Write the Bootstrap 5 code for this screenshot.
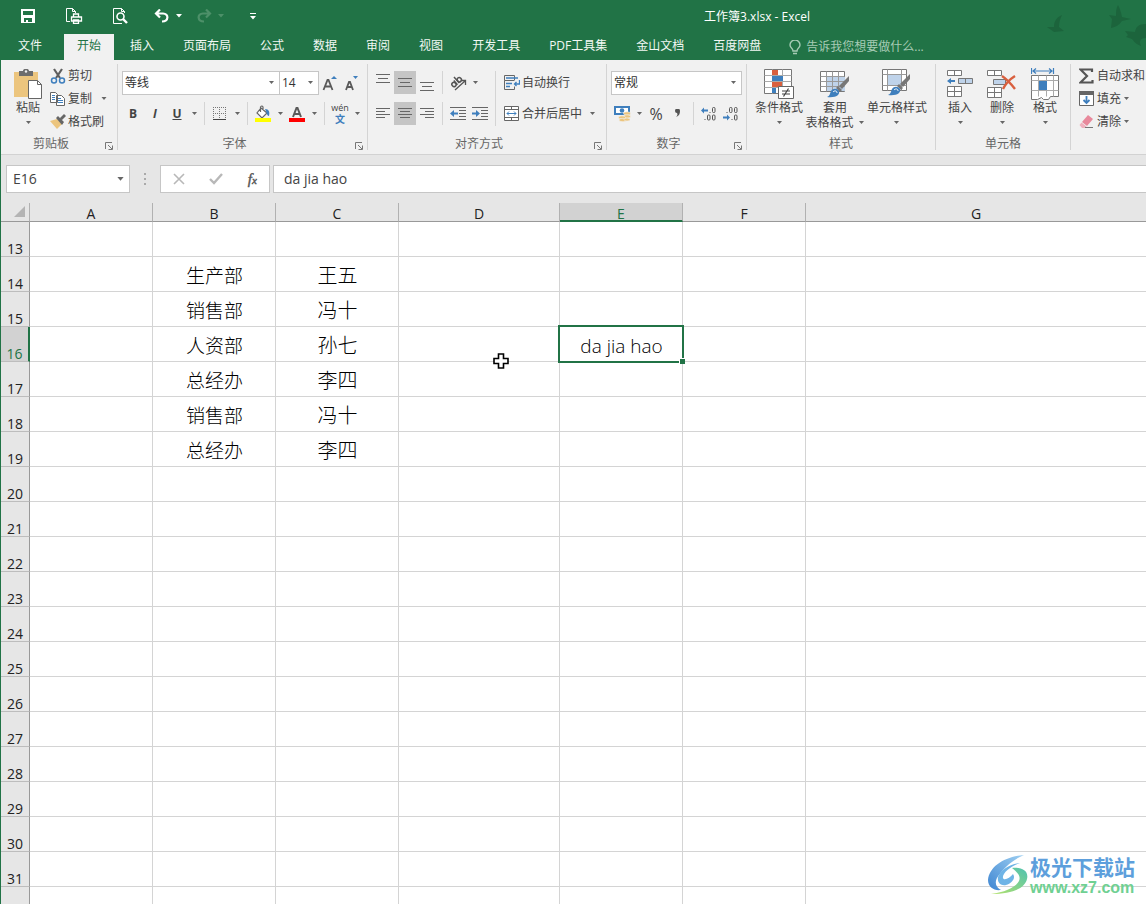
<!DOCTYPE html>
<html lang="zh-CN">
<head>
<meta charset="utf-8">
<meta name="viewport" content="width=device-width, initial-scale=1">
<title>工作簿3.xlsx - Excel</title>
<link href="https://cdn.jsdelivr.net/npm/bootstrap@5.3.0/dist/css/bootstrap.min.css" rel="stylesheet">
<style>
:root{--xl:#217346;--ink:#444;--line:#c6c6c6}
body{font-family:"Open Sans","Noto Sans CJK SC",sans-serif;font-size:12px;line-height:16px;color:var(--ink);background:#fff;border-left:1px solid var(--xl);overflow:hidden}
button{font:inherit;color:inherit;border:0;background:none;padding:0}
svg{display:block;flex:none}
.topbar{background:var(--xl);color:#fff}
.quick{height:34px;padding:0 0 2px 16px}
.quick button{width:22px;height:24px;display:flex;align-items:center;justify-content:center}
.quick .mini{width:12px}
.quick .far{margin-left:24px}
.quick .mid{margin-left:20px}
.doc-title{padding:2px 336px 0 0}
.birds{right:0;top:0}
.tabs{height:26px;gap:1px}
.tabs a{color:#f2f8f4;text-decoration:none;padding:3px 14px;height:26px;line-height:18px;white-space:nowrap}
.tabs a.file{padding:3px 17px;margin-right:4px}
.tabs a.active{background:#f1f1f1;color:var(--xl);padding:3px 13px 3px 13px;margin-right:1px}
.hint{color:#a6cbb5;padding-left:13px;gap:5px}
.hint input{font:inherit;line-height:18px;background:none;border:0;padding:0;width:130px}
.hint input::placeholder{color:#a6cbb5;opacity:1}
.ribbon{background:#f1f1f1;height:95px;border-bottom:1px solid #d2d2d2;overflow:hidden}
.group{flex:none;display:flex;flex-direction:column;border-right:1px solid #d4d4d4;margin:4px 0}
.group-body{height:71px;padding:7px 4px 0}
.clip-body{padding:0 4px 0 13px;gap:8px}
.group-name{color:#666;display:flex;height:16px}
.group-name span{flex:1;text-align:center;padding-top:2px;line-height:16px}
.group-name button{width:16px;display:flex;align-items:center;justify-content:center;padding-top:7px}
.g-clip{width:117px}.g-font{width:250px}.g-align{width:239px}.g-num{width:140px}.g-style{width:189px}.g-cell{width:135px}
.line-of{display:flex;height:23px}
.line-of+.line-of{margin-top:8px}
.tool{width:22px;height:23px;display:flex;align-items:center;justify-content:center;flex:none}
.tool.on{background:#c5c5c5}
.tool.percent{font-size:16px}
.drop{width:12px;height:23px;display:flex;align-items:center;justify-content:center;flex:none}
.split{width:1px;background:#d4d4d4;margin:0 4px;flex:none}
.pinyin{font-size:9px;line-height:12px;color:#444}
.pinyin b{color:#3f7fbd;font-size:10px;line-height:11px}
.form-select.pick{font-size:12px;line-height:16px;color:#333;border:1px solid var(--line);border-radius:0;height:24px;padding:2px 18px 2px 2px;flex:none;background-color:#fff;background-size:7px 4px;background-position:right 4px center;background-image:url("data:image/svg+xml,%3Csvg xmlns='http://www.w3.org/2000/svg' viewBox='0 0 7 4'%3E%3Cpath d='M1 0h5L3.500 3z' fill='%23666'/%3E%3C/svg%3E")}
.pick.face{width:158px}.pick.pt{width:40px;margin-left:-1px}.pick.fmt{width:131px}
.small-cmd{display:flex;align-items:center;height:23px;gap:2px;white-space:nowrap}
.small-cmd svg:first-child{width:16px}
.big{display:flex;flex-direction:column;align-items:center;line-height:15px;white-space:nowrap}
.big .pic{height:32px;display:flex;align-items:center}
.big .arrow{height:15px;display:flex;align-items:center}
.formula{background:#e6e6e6;padding:10px 0 10px 5px;height:48px}
.formula .pick.name{width:124px;height:28px;font-size:14px;line-height:20px;padding-left:6px;color:#444;background-size:9px 5px}
.boxed{background:#fff;border:1px solid var(--line);height:28px}
.grip{width:30px;display:flex;justify-content:center;align-items:center}
.fx{width:110px;margin-right:3px}
.fn{font:italic 15px/20px "Liberation Serif",serif;color:#555;-webkit-text-stroke:.4px #555}
.fn span{font-size:11px}
.entry{font-size:14px;line-height:20px;color:#444;padding:0 10px 2px;border-right:0;border-radius:0;outline:0;min-width:0}
.sheet{table-layout:fixed;border-collapse:separate;border-spacing:0;width:100%;color:#000}
.sheet th{background:#e6e6e6;font-weight:400;font-size:14px;text-align:center;padding:0;color:#222}
.sheet thead th{height:19px;line-height:14px;border-bottom:1px solid #999;border-right:1px solid #b1b1b1;vertical-align:bottom}
.sheet tbody th{height:35px;line-height:14px;vertical-align:bottom;border-right:1px solid #999;border-bottom:1px solid #bdbdbd}
.sheet td{height:35px;padding:3px 0 0 1px;border-right:1px solid #d4d4d4;border-bottom:1px solid #d4d4d4;text-align:center;font-size:19px;line-height:28px;font-weight:300;vertical-align:middle}
.sheet td:nth-of-type(3){font-size:20px}
.sheet tr>:last-child{border-right:0}
.sheet thead th.sel{background:#d2d2d2;color:var(--xl);border-bottom:2px solid var(--xl);line-height:13px}
.sheet tbody th.sel{background:#d2d2d2;color:var(--xl);border-right:2px solid var(--xl)}
.c-no{width:29px}.c-m{width:123px}.c-w{width:161px}
.cursor-ring{inset:-2px;border:2px solid var(--xl)}
.handle{right:-3px;bottom:-3px;width:6px;height:6px;background:var(--xl);border:solid #fff;border-width:1px 0 0 1px}
.pointer{right:50px;bottom:-8px}
.brand{right:11px;bottom:7px;gap:1px}
.brand-cn{font:700 21px/26px "Noto Sans CJK SC",sans-serif;color:#5d9fdc}
.brand-url{font:700 16px/18px "Liberation Sans",sans-serif;color:#6fd092}
</style>
</head>
<body class="vh-100 position-relative">
<svg width="0" height="0" class="position-absolute"><defs>
<symbol id="dn" viewBox="0 0 7 4"><path d="M1 0h5L3.500 3z" fill="#666"/></symbol>
<symbol id="launch" viewBox="0 0 8 8"><path d="M.5 7V.5H7M3 3l4 4M7.500 3.500v4h-4" fill="none" stroke="#777"/></symbol>
<symbol id="brush" viewBox="0 0 24 24"><path d="M23 1v5l-7 8-3-3z" fill="#777"/><path d="M12 11l4 4-2 2-4-4z" fill="#777"/><path d="M1 22c3-1 3-4 4-6 2-3 6-3 8 0 1 4-3 7-12 6z" fill="#3f7fbd"/><path d="M7 17c2-2 4-1 4 1" stroke="#fff" fill="none"/></symbol>
</defs></svg>

<header class="topbar position-relative">
  <svg class="birds position-absolute" width="104" height="50" viewBox="0 0 104 50" fill="#1c643c"><path d="M20 15c-7 3-8 8-8 12l-7 0c2 2 5 3 7 5l10-1-5-4c0-4 1-8 3-12zM76 5c-2 3-2 7-2 11l-7-1 3 4-1 9c5-1 8-3 11-7l9-2-9-2c-1-5-2-8-4-12zM104 24c-8 0-10 3-11 8l-10-1 3 4-2 2 6 2c3 4 6 6 9 7-2-5-1-8 5-8z"/></svg>
  <div class="quick d-flex align-items-center">
    <button aria-label="保存"><svg width="14" height="14" viewBox="0 0 14 14"><path d="M0 0h14v14H0zM2 2v4h10V2zM3 9v4h2v-2h2v2h4V9z" fill="#fff" fill-rule="evenodd"/></svg></button>
    <button class="far" aria-label="快速打印"><svg width="17" height="16" viewBox="0 0 17 16" fill="none" stroke="#fff"><path d="M4 13.500H.5V.5h6l3 3V5M6.500.5v3h3"/><path d="M7.500 8.500V6h5v2.500M5.500 9h10v4h-10zM7.500 12h5v3.300h-5z" stroke-width="1.300"/></svg></button>
    <button class="far" aria-label="打印预览"><svg width="15" height="16" viewBox="0 0 15 16" fill="none" stroke="#fff"><path d="M3 15.500H.5V.5h8l3 3V5M8.500.5v3h3M3 15.500h6"/><circle cx="7.500" cy="8.500" r="3.500" stroke-width="1.600"/><path d="M10 11l4 4" stroke-width="2.400"/></svg></button>
    <button class="mid" aria-label="撤消"><svg width="16" height="14" viewBox="0 0 16 14" fill="none" stroke="#fff" stroke-width="2.200"><path d="M6 .5L2 4.500 6 8.500M2 4.500h7c6 0 6 8-1 8"/></svg></button>
    <button class="mini" aria-label="撤消列表"><svg width="6" height="4" viewBox="0 0 6 4"><path d="M0 0h6L3 3.500z" fill="#fff"/></svg></button>
    <button class="ms-2" aria-label="恢复"><svg width="16" height="14" viewBox="0 0 16 14" fill="none" stroke="#4d9069" stroke-width="2.200"><path d="M10 .5l4 4-4 4M14 4.500H7c-6 0-6 8 1 8"/></svg></button>
    <button class="mini" aria-label="恢复列表"><svg width="6" height="4" viewBox="0 0 6 4"><path d="M0 0h6L3 3.500z" fill="#4d9069"/></svg></button>
    <button class="mini mid" aria-label="自定义快速访问工具栏"><svg width="6" height="7" viewBox="0 0 6 7"><path d="M0 0h6v1H0zM0 3h6L3 6.500z" fill="#fff"/></svg></button>
    <div class="doc-title ms-auto">工作簿3.xlsx - Excel</div>
  </div>
  <nav class="tabs d-flex">
    <a class="file" href="#">文件</a><a class="active" href="#">开始</a><a href="#">插入</a><a href="#">页面布局</a><a href="#">公式</a><a href="#">数据</a><a href="#">审阅</a><a href="#">视图</a><a href="#">开发工具</a><a href="#">PDF工具集</a><a href="#">金山文档</a><a href="#">百度网盘</a>
    <label class="hint d-flex align-items-center"><svg width="12" height="15" viewBox="0 0 12 15" fill="none" stroke="#a6cbb5" stroke-width="1.400"><path d="M4 11c0-3-3-3-3-6a5 5 0 0 1 10 0c0 3-3 3-3 6zM4 13.500h4"/></svg><input type="text" aria-label="告诉我" placeholder="告诉我您想要做什么..."></label>
  </nav>
</header>

<section class="ribbon d-flex">
  <div class="group g-clip">
    <div class="group-body clip-body d-flex">
      <button class="big pt-1"><span class="pic"><svg width="28" height="30" viewBox="0 0 28 30"><path d="M0 3h24v25H0z" fill="#ecc57e"/><path d="M5 2h4c0-3 6-3 6 0h4v5H5z" fill="#6d6d6d"/><circle cx="12" cy="2.500" r="1.200" fill="#f1f1f1"/><path d="M14.500 11.500h9l4 4v14h-13z" fill="#fff" stroke="#666"/><path d="M23.500 11.500v4h4" fill="none" stroke="#666"/></svg></span>粘贴<span class="arrow"><svg width="7" height="4"><use href="#dn"/></svg></span></button>
      <div>
        <button class="small-cmd"><svg width="16" height="16" viewBox="0 0 16 16"><path d="M4 1l6 9M12 1L6 10" stroke="#5f5f5f" stroke-width="2.200"/><g fill="none" stroke="#3f7fbd" stroke-width="1.500"><circle cx="4" cy="12.500" r="2.500"/><circle cx="12" cy="12.500" r="2.500"/></g></svg>剪切</button>
        <button class="small-cmd"><svg width="16" height="14" viewBox="0 0 16 14"><path d="M.5.5h5l2 2v8h-7zM6.500 3.500h5l3 3v7h-8z" fill="#fff" stroke="#666"/><path d="M2 3.500h3M2 5.500h3M2 7.500h3M8 6.500h3M8 8.500h5M8 10.500h5" stroke="#3f7fbd"/></svg>复制<svg class="ms-1" width="12" height="4"><use href="#dn"/></svg></button>
        <button class="small-cmd"><svg width="16" height="15" viewBox="0 0 16 15"><path d="M0 7l7-2 5 5-5 5z" fill="#ecc57e"/><path d="M6 4l2-2 6 6-2 3zM10 4l4-4 2 2-4 4z" fill="#666"/></svg>格式刷</button>
      </div>
    </div>
    <div class="group-name"><span>剪贴板</span><button aria-label="剪贴板设置"><svg width="8" height="8"><use href="#launch"/></svg></button></div>
  </div>

  <div class="group g-font">
    <div class="group-body">
      <div class="line-of">
        <select class="form-select pick face" aria-label="字体"><option>等线</option></select><select class="form-select pick pt" aria-label="字号"><option>14</option></select>
        <button class="tool" aria-label="增大字号"><svg width="16" height="16" viewBox="0 0 16 16"><path d="M1.500 15L5.500 5h1l4 10M3 11.500h6" fill="none" stroke="#5a5a5a" stroke-width="1.800"/><path d="M9 4l3-3 3 3z" fill="#3f7fbd"/></svg></button>
        <button class="tool" aria-label="减小字号"><svg width="16" height="16" viewBox="0 0 16 16"><path d="M2 15l3-8h1l3 8M3 12h5" fill="none" stroke="#5a5a5a" stroke-width="1.800"/><path d="M9 1h5l-2.500 3z" fill="#3f7fbd"/></svg></button>
      </div>
      <div class="line-of">
        <button class="tool fw-bold" aria-label="加粗">B</button><button class="tool fw-bold fst-italic" aria-label="倾斜">I</button><button class="tool fw-bold text-decoration-underline" aria-label="下划线">U</button><button class="drop" aria-label="下划线选项"><svg width="7" height="4"><use href="#dn"/></svg></button><i class="split"></i>
        <button class="tool" aria-label="边框"><svg width="14" height="14" viewBox="0 0 14 14" fill="none" stroke="#777"><path d="M.5 0v12M6.500 0v12M12.500 0v12M0 .5h13M0 6.500h13" stroke-dasharray="1 1"/><path d="M0 12.500h13" stroke="#444"/></svg></button><button class="drop" aria-label="边框选项"><svg width="7" height="4"><use href="#dn"/></svg></button><i class="split"></i>
        <button class="tool" aria-label="填充颜色"><svg width="16" height="17" viewBox="0 0 16 17"><path d="M6 3l6 5-5 5-5-5zM5.500 7V2q1.500-2 2.500 0v3" fill="#fff" stroke="#666" stroke-width="1.200"/><path d="M10 4c4 0 5 3 4 7-2 0-2-3-4-7z" fill="#3f7fbd"/><path d="M0 13h16v4H0z" fill="#ff0"/></svg></button><button class="drop" aria-label="填充颜色选项"><svg width="7" height="4"><use href="#dn"/></svg></button>
        <button class="tool" aria-label="字体颜色"><svg width="16" height="16" viewBox="0 0 16 16"><path d="M4 11L7.500 2h1L12 11M5 8h6" fill="none" stroke="#5a5a5a" stroke-width="2"/><path d="M0 12h16v4H0z" fill="red"/></svg></button><button class="drop" aria-label="字体颜色选项"><svg width="7" height="4"><use href="#dn"/></svg></button><i class="split"></i>
        <button class="tool pinyin flex-column" aria-label="拼音指南"><span>wén</span><b>文</b></button><button class="drop" aria-label="拼音选项"><svg width="7" height="4"><use href="#dn"/></svg></button>
      </div>
    </div>
    <div class="group-name"><span>字体</span><button aria-label="字体设置"><svg width="8" height="8"><use href="#launch"/></svg></button></div>
  </div>

  <div class="group g-align">
    <div class="group-body d-flex">
      <div>
        <div class="line-of">
          <button class="tool" aria-label="顶端对齐"><svg width="14" height="17" viewBox="0 0 14 17" stroke="#666"><path d="M0 .5h14M2 4.500h10M0 8.500h14"/></svg></button><button class="tool on" aria-label="垂直居中"><svg width="14" height="17" viewBox="0 0 14 17" stroke="#666"><path d="M0 4.500h14M2 8.500h10M0 12.500h14"/></svg></button><button class="tool" aria-label="底端对齐"><svg width="14" height="17" viewBox="0 0 14 17" stroke="#666"><path d="M0 8.500h14M2 12.500h10M0 16.500h14"/></svg></button><i class="split"></i>
          <button class="tool" aria-label="方向"><svg width="17" height="16" viewBox="0 0 17 16" fill="none" stroke="#555" stroke-width="1.300"><path d="M5 15L15 6M15.500 10V5.500H11"/><g transform="rotate(-42 6 7)" stroke-width="1.500"><ellipse cx="2.800" cy="7.500" rx="2" ry="2.200"/><path d="M5.300 4.500v5.500M7.800 2v8"/><ellipse cx="10" cy="7.500" rx="2" ry="2.200"/></g></svg></button><button class="drop" aria-label="方向选项"><svg width="7" height="4"><use href="#dn"/></svg></button>
        </div>
        <div class="line-of">
          <button class="tool" aria-label="左对齐"><svg width="14" height="11" viewBox="0 0 14 11" stroke="#666"><path d="M0 .5h14M0 3.500h9M0 6.500h14M0 9.500h9"/></svg></button><button class="tool on" aria-label="居中"><svg width="14" height="11" viewBox="0 0 14 11" stroke="#666"><path d="M0 .5h14M2 3.500h10M0 6.500h14M2 9.500h10"/></svg></button><button class="tool" aria-label="右对齐"><svg width="14" height="11" viewBox="0 0 14 11" stroke="#666"><path d="M0 .5h14M5 3.500h9M0 6.500h14M5 9.500h9"/></svg></button><i class="split"></i>
          <button class="tool" aria-label="减少缩进"><svg width="16" height="13" viewBox="0 0 16 13"><path d="M0 .5h16M9 3.500h7M9 6.500h7M9 9.500h7M0 12.500h16" stroke="#666"/><path d="M0 6.500l4-3.500v2.500h4v2H4V10z" fill="#3f7fbd"/></svg></button><button class="tool" aria-label="增加缩进"><svg width="16" height="13" viewBox="0 0 16 13"><path d="M0 .5h16M9 3.500h7M9 6.500h7M9 9.500h7M0 12.500h16" stroke="#666"/><path d="M8 6.500L4 3v2.500H0v2h4V10z" fill="#3f7fbd"/></svg></button>
        </div>
      </div>
      <i class="split mb-2"></i>
      <div class="ps-1">
        <button class="line-of small-cmd"><svg width="16" height="16" viewBox="0 0 16 16" fill="none" stroke="#666"><path d="M10.500 5V.5H.5v5h10M.5 5.500v9h10v-3"/><path d="M2 3h12M2 8.500h6M2 11.500h4M15.500 5v4h-5M12.500 7l-2 2 2 2" stroke="#3f7fbd" stroke-width="1.300"/></svg>自动换行</button>
        <div class="line-of"><button class="small-cmd"><svg width="16" height="16" viewBox="0 0 16 16" fill="#fff" stroke="#666"><path d="M.5.5h14v14H.5zM.5 3.500h14M.5 11.500h14M7.500.5v3M7.500 11.500v3"/><path d="M3 7.500h9M5 5.500l-2 2 2 2M10 5.500l2 2-2 2" stroke="#3f7fbd" fill="none"/></svg>合并后居中</button><button class="drop ms-1" aria-label="合并选项"><svg width="7" height="4"><use href="#dn"/></svg></button></div>
      </div>
    </div>
    <div class="group-name"><span>对齐方式</span><button aria-label="对齐设置"><svg width="8" height="8"><use href="#launch"/></svg></button></div>
  </div>

  <div class="group g-num">
    <div class="group-body">
      <div class="line-of"><select class="form-select pick fmt" aria-label="数字格式"><option>常规</option></select></div>
      <div class="line-of">
        <button class="tool" aria-label="会计数字格式"><svg width="17" height="16" viewBox="0 0 17 16"><path d="M1 1h14v7H1z" fill="#fff" stroke="#3f7fbd" stroke-width="2"/><circle cx="8" cy="4.500" r="2.300" fill="#3f7fbd"/><g fill="#ecc57e" stroke="#f1f1f1" stroke-width=".6"><ellipse cx="13" cy="7.500" rx="3.500" ry="1.700"/><ellipse cx="13" cy="10.500" rx="3.500" ry="1.700"/><ellipse cx="8" cy="11.500" rx="3.500" ry="1.700"/><ellipse cx="9" cy="14" rx="4" ry="1.700"/><ellipse cx="13" cy="13.500" rx="3" ry="1.500"/></g></svg></button><button class="drop" aria-label="货币选项"><svg width="7" height="4"><use href="#dn"/></svg></button>
        <button class="tool percent" aria-label="百分比样式">%</button><button class="tool" aria-label="千位分隔样式"><svg width="6" height="9" viewBox="0 0 6 9"><path d="M0 2a2.500 2.500 0 0 1 5 0c0 3-1 5-4 6 1-1 2-2 1-4A2 2 0 0 1 0 2z" fill="#555"/></svg></button><i class="split"></i>
        <button class="tool" aria-label="增加小数位数"><svg width="16" height="14" viewBox="0 0 16 14"><path d="M0 3.500l3-3v2h4v2H3v2z" fill="#3f7fbd"/><g fill="none" stroke="#555"><path d="M9 5v1M4 12v1"/><rect x="11.500" y=".5" width="2.500" height="5" rx="1"/><rect x="6.500" y="8" width="2.500" height="5" rx="1"/><rect x="11.500" y="8" width="2.500" height="5" rx="1"/></g></svg></button><button class="tool" aria-label="减少小数位数"><svg width="16" height="14" viewBox="0 0 16 14"><path d="M7 10.500l-3-3v2H0v2h4v2z" fill="#3f7fbd"/><g fill="none" stroke="#555"><path d="M4 5v1M9 12v1"/><rect x="6.500" y=".5" width="2.500" height="5" rx="1"/><rect x="11.500" y=".5" width="2.500" height="5" rx="1"/><rect x="11.500" y="8" width="2.500" height="5" rx="1"/></g></svg></button>
      </div>
    </div>
    <div class="group-name"><span>数字</span><button aria-label="数字设置"><svg width="8" height="8"><use href="#launch"/></svg></button></div>
  </div>

  <div class="group g-style">
    <div class="group-body d-flex pt-1 ps-1 pe-2 justify-content-between">
      <button class="big ps-1"><span class="pic"><svg width="30" height="30" viewBox="0 0 30 30"><path d="M.5.500h27v24H.5z" fill="#fff" stroke="#777"/><path d="M.5 6.500h27M.5 12.500h27M.5 18.500h27M8.500.5v24M18.500.5v24" stroke="#aaa"/><path d="M8 1h6v5H8zM8 13h10v5H8z" fill="#d9603f"/><path d="M8 7h11v5H8zM8 19h4v5H8z" fill="#3f7fbd"/><path d="M14.500 17.500h15v12h-15z" fill="#fff" stroke="#666"/><path d="M18 22h8M18 25h8M24.500 19.500l-5 8" stroke="#444" stroke-width="1.200"/></svg></span>条件格式<span class="arrow"><svg width="7" height="4"><use href="#dn"/></svg></span></button>
      <button class="big"><span class="pic"><svg width="30" height="30" viewBox="0 0 30 30"><path d="M.5 2.500h24v20H.5z" fill="#fff" stroke="#777"/><path d="M7 8h18v14H7z" fill="#bfd3ea"/><path d="M.5 7.500h24M.5 12.500h24M.5 17.500h24M6.500 2.500v20M12.500 2.500v20M18.500 2.500v20" stroke="#999"/><use href="#brush" x="6" y="6" width="24" height="24"/></svg></span><span>套用</span><span class="d-flex align-items-center">表格格式<svg class="ms-1" width="7" height="4"><use href="#dn"/></svg></span></button>
      <button class="big"><span class="pic"><svg width="30" height="30" viewBox="0 0 30 30"><path d="M.5.500h24v21H.5z" fill="#fff" stroke="#777"/><path d="M.5 5.500h24M.5 16.500h24M5.500.5v21M19.500.5v21" stroke="#999"/><path d="M6 6h13v10H6z" fill="#bfd3ea"/><use href="#brush" x="5" y="4" width="24" height="24"/></svg></span>单元格样式<span class="arrow"><svg width="7" height="4"><use href="#dn"/></svg></span></button>
    </div>
    <div class="group-name"><span>样式</span></div>
  </div>

  <div class="group g-cell">
    <div class="group-body d-flex pt-1 px-1">
      <button class="big flex-fill"><span class="pic"><svg width="26" height="30" viewBox="0 0 26 30" fill="#fff" stroke="#777"><path d="M.5 1.500h14v5H.5zM7.500 1.500v5M.5 17.500h14v10H.5zM.5 22.500h14M7.500 17.500v10"/><path d="M11.500 9.500h14v5h-14zM18.500 9.500v5" fill="#bfd3ea"/><path d="M0 12l4-3v2h4v2H4v2z" fill="#3f7fbd" stroke="none"/></svg></span>插入<span class="arrow"><svg width="7" height="4"><use href="#dn"/></svg></span></button>
      <button class="big flex-fill"><span class="pic"><svg width="30" height="30" viewBox="0 0 30 30" fill="#fff" stroke="#777"><path d="M.5 1.500h14v5H.5zM7.500 1.500v5M.5 18.500h14v10H.5zM.5 23.500h14M7.500 18.500v10"/><path d="M6.500 10.500h12v5h-12z" fill="#bfd3ea"/><path d="M15 7q6 4 13 13M28 7q-8 5-12 13" fill="none" stroke="#d9603f" stroke-width="2.400"/></svg></span>删除<span class="arrow"><svg width="7" height="4"><use href="#dn"/></svg></span></button>
      <button class="big flex-fill"><span class="pic"><svg width="28" height="32" viewBox="0 0 28 32"><path d="M.5 0v6M22.500 0v6M2 3h19M5 .5L2 3l3 2.500M18 .5L21 3l-3 2.500" fill="none" stroke="#3f7fbd" stroke-width="1.200"/><path d="M.5 7.500h27v21h-8l-2 3h-5l-2-2-4 2H.5z" fill="#fff" stroke="#777"/><path d="M.5 12.500h27M.5 22.500h27M7.500 7.500v21M15.500 7.500v21M22.500 7.500v21" stroke="#aaa"/><path d="M8 13h8v9H8z" fill="#3f7fbd"/></svg></span>格式<span class="arrow"><svg width="7" height="4"><use href="#dn"/></svg></span></button>
    </div>
    <div class="group-name"><span>单元格</span></div>
  </div>

  <div class="group border-0">
    <div class="group-body pt-0 ps-2">
      <button class="small-cmd"><svg width="16" height="16" viewBox="0 0 16 16"><path d="M13 4V1.500H1.500L8 8l-6.500 6.500H13.500V12" fill="none" stroke="#555" stroke-width="2.200"/></svg>自动求和</button>
      <button class="small-cmd"><svg width="16" height="16" viewBox="0 0 16 16"><path d="M.5.500h14v14H.5z" fill="#fff" stroke="#666"/><path d="M0 0h15v4H0z" fill="#666"/><path d="M7.500 5v7M4.500 9l3 3 3-3" fill="none" stroke="#3f7fbd" stroke-width="1.800"/></svg>填充<svg width="7" height="4"><use href="#dn"/></svg></button>
      <button class="small-cmd"><svg width="16" height="14" viewBox="0 0 16 14"><path d="M9 0l5 4-6 7-5-4z" fill="#e8899c"/><path d="M2.500 7.500l5 4-1.500 1.500H3L.5 10z" fill="#f0b0bd"/><path d="M6 12.500h8" stroke="#777"/></svg>清除<svg width="7" height="4"><use href="#dn"/></svg></button>
    </div>
  </div>
</section>

<section class="formula d-flex">
  <select class="form-select pick name" aria-label="名称框"><option>E16</option></select>
  <div class="grip"><svg width="2" height="12" viewBox="0 0 2 12" fill="#aaa"><path d="M0 0h2v2H0zM0 5h2v2H0zM0 10h2v2H0z"/></svg></div>
  <div class="boxed fx d-flex align-items-center justify-content-around">
    <button aria-label="取消"><svg width="12" height="12" viewBox="0 0 12 12"><path d="M1 1l10 10M11 1L1 11" stroke="#b8b8b8" stroke-width="1.600"/></svg></button>
    <button aria-label="输入"><svg width="14" height="12" viewBox="0 0 14 12"><path d="M1 6l4 4L13 1" fill="none" stroke="#b8b8b8" stroke-width="2.400"/></svg></button>
    <button aria-label="插入函数" class="fn">f<span>x</span></button>
  </div>
  <input class="boxed entry flex-fill" type="text" aria-label="编辑栏" value="da jia hao">
</section>

<table class="sheet">
<colgroup><col class="c-no"><col class="c-m"><col class="c-m"><col class="c-m"><col class="c-w"><col class="c-m"><col class="c-m"><col></colgroup>
<thead><tr><th aria-label="全选"><svg class="ms-auto me-1 mb-1" width="11" height="11" viewBox="0 0 11 11"><path d="M11 0v11H0z" fill="#b4b4b4"/></svg></th><th>A</th><th>B</th><th>C</th><th>D</th><th class="sel">E</th><th>F</th><th>G</th></tr></thead>
<tbody>
<tr><th>13</th><td></td><td></td><td></td><td></td><td></td><td></td><td></td></tr>
<tr><th>14</th><td></td><td>生产部</td><td>王五</td><td></td><td></td><td></td><td></td></tr>
<tr><th>15</th><td></td><td>销售部</td><td>冯十</td><td></td><td></td><td></td><td></td></tr>
<tr><th class="sel">16</th><td></td><td>人资部</td><td>孙七</td><td class="position-relative"><svg class="pointer position-absolute" width="16" height="16" viewBox="0 0 16 16"><path d="M5.500 1h5v4.500H15v5h-4.500V15h-5v-4.500H1v-5h4.500z" fill="#fff" stroke="#000" stroke-width="1.600"/></svg></td><td class="position-relative">da jia hao<span class="cursor-ring position-absolute"></span><span class="handle position-absolute"></span></td><td></td><td></td></tr>
<tr><th>17</th><td></td><td>总经办</td><td>李四</td><td></td><td></td><td></td><td></td></tr>
<tr><th>18</th><td></td><td>销售部</td><td>冯十</td><td></td><td></td><td></td><td></td></tr>
<tr><th>19</th><td></td><td>总经办</td><td>李四</td><td></td><td></td><td></td><td></td></tr>
<tr><th>20</th><td></td><td></td><td></td><td></td><td></td><td></td><td></td></tr>
<tr><th>21</th><td></td><td></td><td></td><td></td><td></td><td></td><td></td></tr>
<tr><th>22</th><td></td><td></td><td></td><td></td><td></td><td></td><td></td></tr>
<tr><th>23</th><td></td><td></td><td></td><td></td><td></td><td></td><td></td></tr>
<tr><th>24</th><td></td><td></td><td></td><td></td><td></td><td></td><td></td></tr>
<tr><th>25</th><td></td><td></td><td></td><td></td><td></td><td></td><td></td></tr>
<tr><th>26</th><td></td><td></td><td></td><td></td><td></td><td></td><td></td></tr>
<tr><th>27</th><td></td><td></td><td></td><td></td><td></td><td></td><td></td></tr>
<tr><th>28</th><td></td><td></td><td></td><td></td><td></td><td></td><td></td></tr>
<tr><th>29</th><td></td><td></td><td></td><td></td><td></td><td></td><td></td></tr>
<tr><th>30</th><td></td><td></td><td></td><td></td><td></td><td></td><td></td></tr>
<tr><th>31</th><td></td><td></td><td></td><td></td><td></td><td></td><td></td></tr>
<tr><th></th><td></td><td></td><td></td><td></td><td></td><td></td><td></td></tr>
</tbody>
</table>

<div class="brand position-absolute d-flex align-items-center">
  <svg width="42" height="42" viewBox="0 0 42 42"><defs><linearGradient id="bl" x1="1" y1="0" x2="0" y2="1"><stop offset="0" stop-color="#9fd0f2"/><stop offset="1" stop-color="#3f86d2"/></linearGradient><linearGradient id="gr" x1="1" y1="0" x2="0" y2="1"><stop offset="0" stop-color="#4fc2b0"/><stop offset="1" stop-color="#b5e26a"/></linearGradient></defs><path d="M37 1C19 2 2 12 1 26c0 7 6 11 13 10-6-3-7-9-2-15C17 14 25 6 37 1z" fill="url(#bl)"/><path d="M33 9c-9 3-18 10-17 15 1 3 7 0 10-4 3 4-1 9-7 11-5 1-9-2-8-8C13 17 22 10 33 9z" fill="#6fb4e6"/><path d="M25 14c10-1 17 3 15 11-2 9-14 15-36 15 14-2 24-6 28-13 2-5-1-8-7-13z" fill="url(#gr)"/></svg>
  <div><div class="brand-cn">极光下载站</div><div class="brand-url">www.xz7.com</div></div>
</div>
<script src="https://cdn.jsdelivr.net/npm/bootstrap@5.3.0/dist/js/bootstrap.bundle.min.js"></script>
</body>
</html>
